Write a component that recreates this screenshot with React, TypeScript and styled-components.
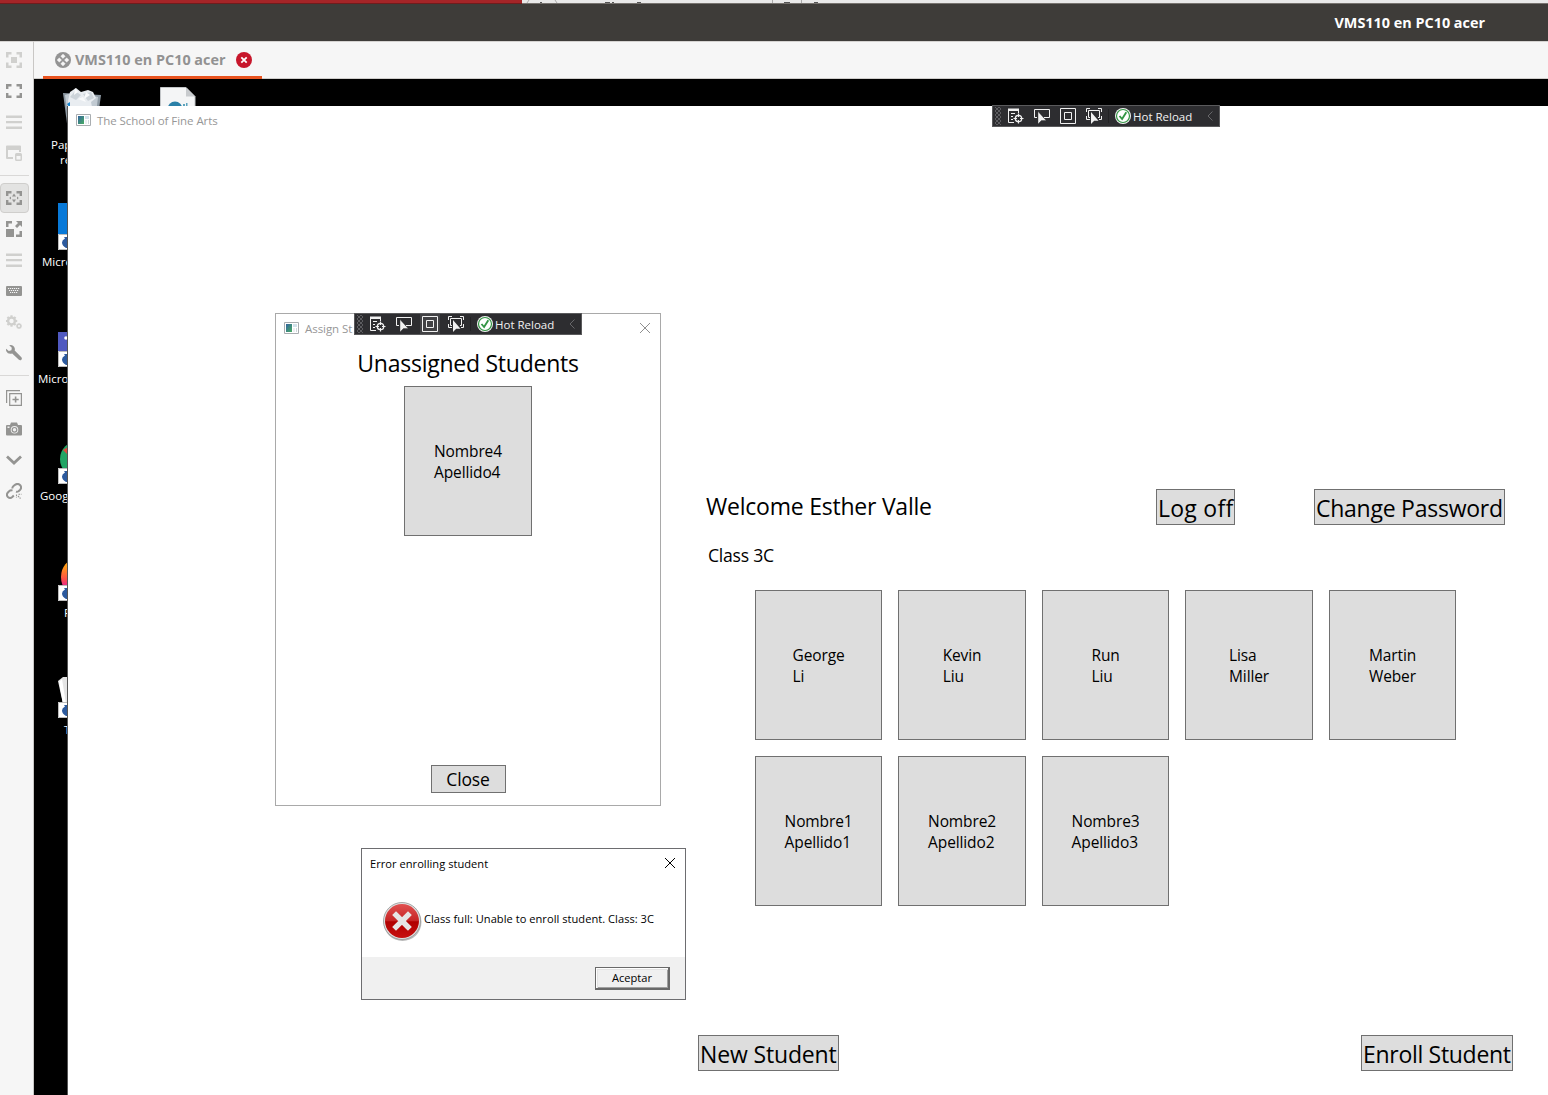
import React from "react";
import styled, { createGlobalStyle } from "styled-components";

const GlobalStyle = createGlobalStyle`
  * { box-sizing: border-box; }
  html, body { margin: 0; padding: 0; overflow: hidden; background: #000; }
  body { font-family: "Open Sans", "Noto Sans", sans-serif; color: #000; }
  svg { display: block; flex: none; }
  button { font-family: inherit; color: inherit; margin: 0; border-radius: 0; white-space: nowrap; }
`;

const Page = styled.div`
  width: 1548px;
  height: 1095px;
  display: flex;
  flex-direction: column;
  overflow: hidden;
`;

const TopStrip = styled.div`
  flex: none;
  height: 4px;
  display: flex;
  background: #e9e9e9;
  border-bottom: 1px solid #77736f;
`;

const RedStrip = styled.div`
  width: 522px;
  height: 4px;
  background: #a52528;
  border-bottom: 1px solid #701c1d;
`;

const HostTitle = styled.header`
  flex: none;
  height: 37px;
  display: flex;
  align-items: center;
  justify-content: flex-end;
  padding: 0 63px 0 0;
  background: #3e3c39;
  color: #fff;
  font-size: 14.4px;
  font-weight: 700;
  line-height: 20px;
  white-space: nowrap;
`;

const HostBody = styled.div`
  flex: 1;
  display: flex;
  min-height: 0;
`;

const Sidebar = styled.nav`
  flex: none;
  width: 34px;
  display: flex;
  flex-direction: column;
  align-items: flex-start;
  padding-top: 3px;
  gap: 1px;
  background: #f6f6f6;
  border-top: 1px solid #d5d3d1;
  border-right: 1px solid #c9c7c5;
`;

const Tool = styled.div<{ $active?: boolean; $dim?: boolean }>`
  width: 29px;
  height: 30px;
  display: flex;
  align-items: center;
  justify-content: center;
  padding-right: 1px;
  color: ${(p) => (p.$dim ? "#d0d0ce" : "#949492")};
  background: ${(p) => (p.$active ? "#e3e3e2" : "transparent")};
  border: 1px solid ${(p) => (p.$active ? "#cfcecc" : "transparent")};
  border-radius: 4px;
`;

const ToolRule = styled.div`
  width: 29px;
  height: 1px;
  margin: 6px 0;
  background: #d9d8d7;
`;

const Viewer = styled.div`
  flex: 1;
  min-width: 0;
  display: flex;
  flex-direction: column;
`;

const TabBar = styled.div`
  flex: none;
  height: 38px;
  padding-left: 9px;
  display: flex;
  background: #f6f6f6;
  border-top: 1px solid #d5d3d1;
  border-bottom: 1px solid #cfcdcb;
`;

const Tab = styled.div`
  width: 219px;
  height: 37px;
  display: flex;
  align-items: center;
  gap: 4px;
  padding: 1px 10px 0 12px;
  border-bottom: 3px solid #e95420;
  color: #929292;
  font-size: 14.4px;
  font-weight: 700;
  white-space: nowrap;
`;

const TabText = styled.span`
  width: 152px;
`;

const Desktop = styled.main`
  position: relative;
  flex: 1;
  overflow: hidden;
  background: #000;
`;

const DesktopItem = styled.div<{ $x: number; $y: number }>`
  position: absolute;
  left: ${(p) => p.$x}px;
  top: ${(p) => p.$y}px;
  color: #fff;
  font-size: 11.5px;
  line-height: 15px;
  white-space: pre;
`;

const MainWindow = styled.section`
  position: absolute;
  left: 33px;
  top: 27px;
  width: 1481px;
  height: 989px;
  background: #fff;
  border-left: 1px solid #555;
  display: flex;
  flex-direction: column;
`;

const WindowTitle = styled.div`
  flex: none;
  height: 28px;
  display: flex;
  align-items: center;
  gap: 6px;
  padding-left: 8px;
  color: #979797;
  font-size: 11.5px;
  letter-spacing: -0.06px;
  white-space: nowrap;
`;

const MainContent = styled.div`
  display: flex;
  flex-direction: column;
  width: 815px;
  margin: 355px 0 0 630px;
`;

const HeaderRow = styled.div`
  height: 36px;
  display: flex;
  align-items: center;
  padding-left: 8px;
`;

const Welcome = styled.h1`
  width: 450px;
  margin: 0;
  font-size: 23px;
  font-weight: 400;
  height: 36px;
  line-height: 34px;
  letter-spacing: -0.23px;
`;

const FlatButton = styled.button<{ $w: number; $track: number; $ml?: string }>`
  width: ${(p) => p.$w}px;
  height: 36px;
  margin-left: ${(p) => p.$ml ?? "0"};
  padding: 2px 0 0 1px;
  background: #ddd;
  border: 1px solid #707070;
  font-size: 23px;
  line-height: 32px;
  letter-spacing: ${(p) => p.$track}px;
  text-align: left;
`;

const ClassName = styled.h2`
  margin: 18px 0 0 10px;
  font-size: 17.6px;
  font-weight: 400;
  height: 25px;
  line-height: 25px;
  letter-spacing: -0.25px;
`;

const StudentGrid = styled.div`
  display: grid;
  grid-template-columns: repeat(5, 127.5px);
  grid-auto-rows: 150px;
  gap: 16px;
  margin: 22px 0 0 56.8px;
`;

const StudentCard = styled.button`
  width: 100%;
  height: 150px;
  padding: 2px 0 0;
  display: flex;
  align-items: center;
  justify-content: center;
  background: #ddd;
  border: 1px solid #707070;
  font-size: 15.5px;
  line-height: 21px;
  letter-spacing: -0.12px;
  text-align: left;
`;

const FooterRow = styled.div`
  display: flex;
  margin-top: 129px;
`;

const AssignWindow = styled.section`
  position: absolute;
  left: 241px;
  top: 234px;
  width: 386px;
  height: 493px;
  display: flex;
  flex-direction: column;
  align-items: center;
  background: #fff;
  border: 1px solid #a9a9a9;
`;

const AssignTitle = styled(WindowTitle)`
  width: 100%;
  padding-right: 9px;
`;

const Spacer = styled.span`
  flex: 1;
`;

const Heading = styled.h2`
  margin: 4px 0 0;
  height: 34px;
  font-size: 23px;
  font-weight: 400;
  line-height: 34px;
  letter-spacing: -0.25px;
`;

const AssignList = styled.div`
  width: 128px;
  margin-top: 6px;
  height: 379px;
`;

const CloseButton = styled.button`
  width: 75px;
  height: 28px;
  padding: 0;
  background: #ddd;
  border: 1px solid #707070;
  font-size: 17.5px;
  line-height: 26px;
  letter-spacing: -0.15px;
`;

const ErrorWindow = styled.section`
  position: absolute;
  left: 327px;
  top: 769px;
  width: 325px;
  height: 152px;
  display: flex;
  flex-direction: column;
  background: #fff;
  border: 1px solid #6d6d70;
  font-size: 11.1px;
  letter-spacing: 0.03px;
  white-space: nowrap;
`;

const ErrorTitle = styled.div`
  height: 28px;
  padding: 0 9px 0 8px;
  display: flex;
  align-items: center;
  justify-content: space-between;
`;

const ErrorTitleText = styled.span`
  padding-top: 1px;
`;

const ErrorBody = styled.div`
  height: 80px;
  display: flex;
  align-items: center;
  gap: 2px;
  padding: 7px 0 0 20px;
`;

const ErrorText = styled.span`
  padding-bottom: 5px;
`;

const ErrorFooter = styled.div`
  flex: 1;
  display: flex;
  align-items: flex-start;
  justify-content: flex-end;
  padding: 10px 15px 0 0;
  background: #f0f0f0;
`;

const AcceptButton = styled.button`
  width: 75px;
  height: 23px;
  padding: 0;
  background: #f0f0f0;
  border: solid #696969;
  border-width: 1px 2px 2px 1px;
  box-shadow: inset 1px 1px #fff, inset 2px 2px #e3e3e3, inset -1px -1px #a0a0a0;
  font-size: 11.1px;
  line-height: 18px;
`;

const DebugBar = styled.div<{ $x: number; $y: number }>`
  position: absolute;
  left: ${(p) => p.$x}px;
  top: ${(p) => p.$y}px;
  width: 228px;
  height: 22px;
  display: flex;
  align-items: center;
  background: #2d2d30;
  border: 1px solid #5a5a5c;
  color: #f1f1f1;
`;

const DebugGrip = styled.div`
  width: 6px;
  height: 18px;
  margin: 0 5px 0 2px;
  background-image: radial-gradient(#77777b 0.6px, transparent 0.9px),
    radial-gradient(#77777b 0.6px, transparent 0.9px);
  background-size: 4px 4px;
  background-position: 0 0, 2px 2px;
`;

const DebugTool = styled.div<{ $lit?: boolean }>`
  width: 20px;
  height: 20px;
  margin-right: 6px;
  display: flex;
  align-items: center;
  justify-content: center;
  background: ${(p) => (p.$lit ? "#414144" : "transparent")};
`;

const DebugRule = styled.div`
  width: 1px;
  height: 14px;
  margin: 0 6px 0 -2px;
  background: #222224;
`;

const DebugText = styled.span`
  width: 75px;
  padding: 1px 0 0 2px;
  font-size: 11.5px;
  line-height: 18px;
  white-space: nowrap;
`;

const AppIcon = () => (
  <svg width="15" height="12" viewBox="0 0 15 12">
    <defs>
      <linearGradient id="appBlue" x1="0" y1="0" x2="1" y2="1">
        <stop offset="0" stopColor="#3464a0" />
        <stop offset="1" stopColor="#48ad62" />
      </linearGradient>
    </defs>
    <path d="M.5.5h14v11H.5z" fill="#fff" stroke="#a9adb0" />
    <path d="M2 2h6v8H2z" fill="url(#appBlue)" />
    <path d="M9 2h4v3H9z" fill="#d3e2eb" />
    <path d="M9 6h2v4H9z" fill="#eceff2" />
    <path d="M12 6h1v4h-1z" fill="#cfd8dc" />
  </svg>
);

const Cross = ({ color }: { color: string }) => (
  <svg width="12" height="12" viewBox="0 0 12 12">
    <path d="M1 1l10 10M11 1L1 11" stroke={color} strokeWidth="1" fill="none" />
  </svg>
);

const HotReloadBar = ({ x, y, lit }: { x: number; y: number; lit?: boolean }) => (
  <DebugBar $x={x} $y={y}>
    <DebugGrip />
    <DebugTool>
      <svg width="16" height="16" viewBox="0 0 16 16" fill="none" stroke="#f1f1f1">
        <path d="M0 .5h11V3H0z" fill="#f1f1f1" stroke="none" />
        <path d="M.5 3v11.500H6M10.500 3v2M3 5.500h4M3 8.500h2M3 11.500h2" />
        <circle cx="10.500" cy="10.500" r="3.200" strokeWidth="1.300" />
        <path d="M10.500 5.500v3.500M10.500 12v3.500M5.500 10.500H9M12 10.500h3.500" strokeWidth="1.200" />
      </svg>
    </DebugTool>
    <DebugTool>
      <svg width="16" height="16" viewBox="0 0 16 16" fill="none" stroke="#f1f1f1">
        <path d="M3 9.500H.5v-8h15v8H10" />
        <path d="M4 3.500V16l3.400-3.400 4.800-.1z" fill="#f1f1f1" stroke="#2d2d30" strokeWidth=".4" />
      </svg>
    </DebugTool>
    <DebugTool $lit={lit}>
      <svg width="16" height="16" viewBox="0 0 16 16" fill="none" stroke="#f1f1f1">
        <path d="M.5.5h15v15H.5zM4.500 4.500h7v7h-7z" />
      </svg>
    </DebugTool>
    <DebugTool>
      <svg width="16" height="16" viewBox="0 0 16 16" fill="none" stroke="#f1f1f1">
        <path d="M.5 4V.5H4M12 .5h3.500V4M.5 8v3.500H4M15.500 8v3.500H13M4 9.500H2.500v-7h11v7H12" />
        <path d="M5 4v12l3.200-3.200 4.300-.1z" fill="#f1f1f1" stroke="none" />
      </svg>
    </DebugTool>
    <DebugRule />
    <svg width="16" height="16" viewBox="0 0 16 16">
      <circle cx="8" cy="8" r="8" fill="#f5f5f5" />
      <circle cx="8" cy="8" r="6.500" fill="#fff" stroke="#329544" strokeWidth="1.200" />
      <path d="M4.500 8l2.600 3L11.300 4.200" stroke="#329544" strokeWidth="1.900" fill="none" />
    </svg>
    <DebugText>Hot Reload</DebugText>
    <svg width="8" height="10" viewBox="0 0 8 10">
      <path d="M6.500.5L2 5l4.500 4.500" stroke="#67676a" fill="none" />
    </svg>
  </DebugBar>
);

const Badge = () => (
  <>
    <path d="M0 0h16v16H0z" fill="#fff" />
    <path d="M.5.5h15v15H.5z" fill="none" stroke="#bcbcbc" />
    <path d="M6 3h8v6L11.500 7.500Q8 9 9.500 14H8Q4 11.500 4 8.500q0-2.500 3-4z" fill="#2c5a9e" />
  </>
);

const students = [
  ["George", "Li"],
  ["Kevin", "Liu"],
  ["Run", "Liu"],
  ["Lisa", "Miller"],
  ["Martin", "Weber"],
  ["Nombre1", "Apellido1"],
  ["Nombre2", "Apellido2"],
  ["Nombre3", "Apellido3"],
];

const Student = ({ name }: { name: string[] }) => (
  <StudentCard>
    <span>
      {name[0]}
      <br />
      {name[1]}
    </span>
  </StudentCard>
);

const corners = "M0 5.500V0h5.500v2.500h-3v3zM10.500 0H16v5.500h-2.500v-3h-3zM0 10.500h2.500v3h3V16H0zM13.500 10.500H16V16h-5.500v-2.500h3z";
const wideCorners = "M0 6V1h5.500v2.400H2.400V6zM10.500 1H16v5h-2.400V3.400h-3.100zM0 10h2.400v2.600h3.100V15H0zM13.600 10H16v5h-5.500v-2.400h3.100z";

const ToolIcon = ({ children }: { children: React.ReactNode }) => (
  <svg width="16" height="16" viewBox="0 0 16 16" fill="currentColor">
    {children}
  </svg>
);

const Bars = () => (
  <ToolIcon>
    <path d="M0 1.500h16V4H0zM0 7h16v2.200H0zM0 12.500h16V15H0z" />
  </ToolIcon>
);

const gearTeeth = Array.from({ length: 8 }, (_, i) => i * 45);

const HostTools = () => (
  <Sidebar>
    <Tool $dim>
      <ToolIcon>
        <path d={corners} />
        <path d="M5 5h6v6H5z" />
      </ToolIcon>
    </Tool>
    <Tool>
      <ToolIcon>
        <path d={wideCorners} />
      </ToolIcon>
    </Tool>
    <Tool $dim>
      <Bars />
    </Tool>
    <Tool $dim>
      <ToolIcon>
        <path d="M0 1.500Q0 .5 1 .5h13q1 0 1 1V7h-2V5H2v7h5v2H1q-1 0-1-1z" />
        <path d="M9 9.500Q9 8 10.500 8h4Q16 8 16 9.500v5q0 1.500-1.500 1.500h-4Q9 16 9 14.500zM10.500 11v3.500h4V11z" fillRule="evenodd" />
      </ToolIcon>
    </Tool>
    <ToolRule />
    <Tool $active>
      <ToolIcon>
        <path d={wideCorners} />
        <path d="M8 3.500l2 3H6zM8 12.500l2-3H6zM3.200 8L5 6.500v3zM12.800 8L11 6.500v3z" />
      </ToolIcon>
    </Tool>
    <Tool>
      <ToolIcon>
        <path d="M0 8h8v8H0zM0 6V0h6v2.500H2.500V6zM10 0h6v6l-2-2-3 3-2-2 3-3zM13.500 10H16v6h-6v-2.500h3.500z" />
      </ToolIcon>
    </Tool>
    <Tool $dim>
      <Bars />
    </Tool>
    <Tool>
      <ToolIcon>
        <path d="M1 3h14q1 0 1 1v8q0 1-1 1H1q-1 0-1-1V4q0-1 1-1z" />
        <path d="M2 5.500h12M3 7.500h10M4 9.500h8" stroke="#f6f6f6" strokeWidth="1" strokeDasharray="1.200 .8" />
      </ToolIcon>
    </Tool>
    <Tool $dim>
      <ToolIcon>
        <circle cx="5.500" cy="7" r="3.400" fill="none" stroke="currentColor" strokeWidth="2.400" />
        {gearTeeth.map((a) => (
          <path key={a} d="M4.400 1.300h2.200v2H4.400z" transform={`rotate(${a} 5.500 7)`} />
        ))}
        <circle cx="13" cy="12" r="1.800" fill="none" stroke="currentColor" strokeWidth="1.500" />
        {gearTeeth.map((a) => (
          <path key={a} d="M12.500 8.900h1v1h-1z" transform={`rotate(${a} 13 12)`} />
        ))}
      </ToolIcon>
    </Tool>
    <Tool>
      <ToolIcon>
        <path d="M4.500 0Q8 0 8.800 3.500q.2 1-.1 2L15.400 12.200q1 1.500 0 2.500-1.200 1.100-2.500.1L6.200 8.500Q2 9.700.3 6.200q-.5-1.200-.2-2.500L2.800 6.100l2.600-.8.400-2.500L3.200.2Q3.800 0 4.500 0z" />
      </ToolIcon>
    </Tool>
    <ToolRule />
    <Tool>
      <ToolIcon>
        <path d="M.6 13V.6H14M3.700 3.600h11.700v11.800H3.700z" fill="none" stroke="currentColor" strokeWidth="1.200" />
        <path d="M8.800 6.500h1.600v2.200h2.300v1.600h-2.300v2.200H8.800v-2.200H6.500V8.700h2.300z" />
      </ToolIcon>
    </Tool>
    <Tool>
      <ToolIcon>
        <path d="M5 1.500h6L12 4h3q1 0 1 1v8.500q0 1-1 1H1q-1 0-1-1V5q0-1 1-1h3z" />
        <circle cx="8.500" cy="8.800" r="3.800" fill="#f0f0f0" />
        <circle cx="8.500" cy="8.800" r="2.300" fill="none" stroke="currentColor" strokeWidth="1.200" />
        <path d="M1.500 5.500h2V7h-2z" fill="#f0f0f0" />
      </ToolIcon>
    </Tool>
    <Tool>
      <ToolIcon>
        <path d="M1 4.500l7 6.500 7-6.500" fill="none" stroke="currentColor" strokeWidth="2.800" />
      </ToolIcon>
    </Tool>
    <Tool>
      <ToolIcon>
        <g fill="none" stroke="currentColor" strokeWidth="2">
          <path d="M6.300 5.500Q6.300 4 7.500 3L9.300 1.600q2.800-1.600 4.900.6 1.800 2.400 0 4.500L12.500 8.200q-1.200.9-2.500.5" />
          <path d="M6.500 7.600Q4.700 6.800 3.100 8.200L1.900 9.500q-2 2.300 0 4.500 2.200 1.900 4.400 0L7.800 12.500" />
          <path d="M10.500 11.500v3M12.500 11.300h3M12 13l2.500 2.500" strokeWidth="1.100" strokeDasharray="1.500 .8" />
        </g>
      </ToolIcon>
    </Tool>
  </Sidebar>
);

const DesktopIcons = () => (
  <>
    <DesktopItem $x={28} $y={8}>
      <svg width="40" height="44" viewBox="0 0 40 44">
        <path d="M1 6l38 2-5 36H6z" fill="#8d99a3" />
        <path d="M3 8l10-3 8 2 15 3-4 34H8z" fill="#c1cad2" />
        <path d="M8 5l6-4 5 4 7-2 5 2 3 6-5 4 2 10H9L6 14z" fill="#e9edf1" />
        <path d="M13 4l6 4-5 5-6-3zM21 7l8-2 3 6-6 3z" fill="#cdd4da" />
        <path d="M13 1l3 4-4 3zM24 5l4 3-6 4zM16 12l5-2 3 5z" fill="#fafbfc" />
        <path d="M5 17l3-2v6z" fill="#1584d0" />
      </svg>
    </DesktopItem>
    <DesktopItem $x={126} $y={8}>
      <svg width="36" height="40" viewBox="0 0 36 40">
        <path d="M.5.5H26l9 9V40H.5z" fill="#f4f5f6" stroke="#c2c5c8" />
        <path d="M26 .5v9h9z" fill="#c8cbce" />
        <circle cx="15" cy="22" r="7.500" fill="#2a80a8" />
        <path d="M23 17h2v3h-2zM26 16h1.500v4H26z" fill="#5ba3bd" />
      </svg>
    </DesktopItem>
    <DesktopItem $x={17} $y={58}>{"Papelera"}</DesktopItem>
    <DesktopItem $x={26} $y={73}>{"reciclaje"}</DesktopItem>
    <DesktopItem $x={24} $y={124}>
      <svg width="16" height="48" viewBox="0 0 16 48">
        <path d="M0 0h16v32H0z" fill="#0879d8" />
        <g transform="translate(0 31)"><Badge /></g>
      </svg>
    </DesktopItem>
    <DesktopItem $x={8} $y={175}>Micro</DesktopItem>
    <DesktopItem $x={24} $y={253}>
      <svg width="16" height="36" viewBox="0 0 16 36">
        <path d="M0 0h16v20H0z" fill="#5059c0" />
        <circle cx="8" cy="6" r="1.800" fill="#fff" />
        <g transform="translate(0 19)"><Badge /></g>
      </svg>
    </DesktopItem>
    <DesktopItem $x={4} $y={292}>Micros</DesktopItem>
    <DesktopItem $x={24} $y={362}>
      <svg width="16" height="45" viewBox="0 0 16 45">
        <circle cx="20" cy="18" r="18" fill="#22a565" />
        <path d="M5 9L20 0v18L10 14z" fill="#db4a3e" />
        <g transform="translate(0 27)"><Badge /></g>
      </svg>
    </DesktopItem>
    <DesktopItem $x={6} $y={409}>Google</DesktopItem>
    <DesktopItem $x={24} $y={482}>
      <svg width="16" height="42" viewBox="0 0 16 42">
        <defs>
          <linearGradient id="fox" x1="0" y1="0" x2="0" y2="1">
            <stop offset=".2" stopColor="#ff9b16" />
            <stop offset=".55" stopColor="#fc5147" />
            <stop offset=".75" stopColor="#e9268b" />
          </linearGradient>
        </defs>
        <ellipse cx="18" cy="16" rx="15" ry="18" fill="url(#fox)" />
        <g transform="translate(0 24)"><Badge /></g>
      </svg>
    </DesktopItem>
    <DesktopItem $x={30} $y={526}>F</DesktopItem>
    <DesktopItem $x={24} $y={597}>
      <svg width="16" height="43" viewBox="0 0 16 43">
        <path d="M0 5l5-4h11v27H5z" fill="#e4e4e4" />
        <path d="M1 6l3-3 4 25H5z" fill="#fff" />
        <g transform="translate(0 26)"><Badge /></g>
      </svg>
    </DesktopItem>
    <DesktopItem $x={30} $y={643}>T</DesktopItem>
  </>
);

export default function App() {
  return (
    <Page>
      <GlobalStyle />
      <TopStrip>
        <RedStrip />
        <svg width="320" height="3" viewBox="0 0 320 3">
          <path d="M5 3L7 0M33 0l2 3M250.500 0v3M279.500 0v3" stroke="#aaa" fill="none" />
          <path d="M18 2h2v1h-2zM83 2h5v1h-5zM90 2h2v1h-2zM115 2h4v1h-4zM262 2h6v1h-6zM292 2h4v1h-4z" fill="#555" />
        </svg>
      </TopStrip>
      <HostTitle>VMS110 en PC10 acer</HostTitle>
      <HostBody>
        <HostTools />
        <Viewer>
          <TabBar>
            <Tab>
              <svg width="16" height="16" viewBox="0 0 16 16">
                <circle cx="8" cy="8" r="8" fill="#949494" />
                <path d="M8 2l2.300 2.300L8 6.600 5.700 4.300zM8 9.400l2.300 2.300L8 14l-2.300-2.300zM4.300 5.700L6.600 8l-2.300 2.300L2 8zM11.700 5.700L14 8l-2.300 2.300L9.400 8z" fill="#f6f6f6" stroke="#f6f6f6" strokeWidth=".3" />
              </svg>
              <TabText>VMS110 en PC10 acer</TabText>
              <Spacer />
              <svg width="16" height="16" viewBox="0 0 16 16">
                <circle cx="8" cy="8" r="8" fill="#c7162b" />
                <path d="M5.300 5.300l5.400 5.400M10.700 5.300l-5.400 5.400" stroke="#fff" strokeWidth="1.800" />
              </svg>
            </Tab>
          </TabBar>
          <Desktop>
            <DesktopIcons />
            <MainWindow>
              <WindowTitle>
                <AppIcon />
                The School of Fine Arts
              </WindowTitle>
              <MainContent>
                <HeaderRow>
                  <Welcome>Welcome Esther Valle</Welcome>
                  <FlatButton $w={79} $track={0.25}>Log off</FlatButton>
                  <FlatButton $w={191} $track={-0.25} $ml="79px">Change Password</FlatButton>
                </HeaderRow>
                <ClassName>Class 3C</ClassName>
                <StudentGrid>
                  {students.map((s) => (
                    <Student key={s.join(" ")} name={s} />
                  ))}
                </StudentGrid>
                <FooterRow>
                  <FlatButton $w={141} $track={-0.15}>New Student</FlatButton>
                  <FlatButton $w={152} $track={-0.3} $ml="auto">Enroll Student</FlatButton>
                </FooterRow>
              </MainContent>
            </MainWindow>
            <HotReloadBar x={958} y={26} />
            <AssignWindow>
              <AssignTitle>
                <AppIcon />
                Assign St
                <Spacer />
                <Cross color="#8f8f8f" />
              </AssignTitle>
              <Heading>Unassigned Students</Heading>
              <AssignList>
                <Student name={["Nombre4", "Apellido4"]} />
              </AssignList>
              <CloseButton>Close</CloseButton>
            </AssignWindow>
            <HotReloadBar x={320} y={234} lit />
            <ErrorWindow>
              <ErrorTitle>
                <ErrorTitleText>Error enrolling student</ErrorTitleText>
                <Cross color="#000" />
              </ErrorTitle>
              <ErrorBody>
                <svg width="40" height="40" viewBox="0 0 40 40">
                  <defs>
                    <linearGradient id="errorRed" x1="0" y1="0" x2="0" y2="1">
                      <stop offset="0" stopColor="#e05050" />
                      <stop offset=".5" stopColor="#c62424" />
                      <stop offset=".52" stopColor="#b00000" />
                      <stop offset="1" stopColor="#c81010" />
                    </linearGradient>
                  </defs>
                  <circle cx="20.500" cy="21" r="19" fill="#bbb" />
                  <circle cx="20" cy="20" r="18.500" fill="#e0e0e0" stroke="#959595" strokeWidth=".8" />
                  <circle cx="20" cy="20" r="17" fill="url(#errorRed)" />
                  <path d="M14 14l12 12M26 14L14 26" stroke="#e6e6e6" strokeWidth="5.400" strokeLinecap="square" />
                </svg>
                <ErrorText>Class full: Unable to enroll student. Class: 3C</ErrorText>
              </ErrorBody>
              <ErrorFooter>
                <AcceptButton>Aceptar</AcceptButton>
              </ErrorFooter>
            </ErrorWindow>
          </Desktop>
        </Viewer>
      </HostBody>
    </Page>
  );
}
